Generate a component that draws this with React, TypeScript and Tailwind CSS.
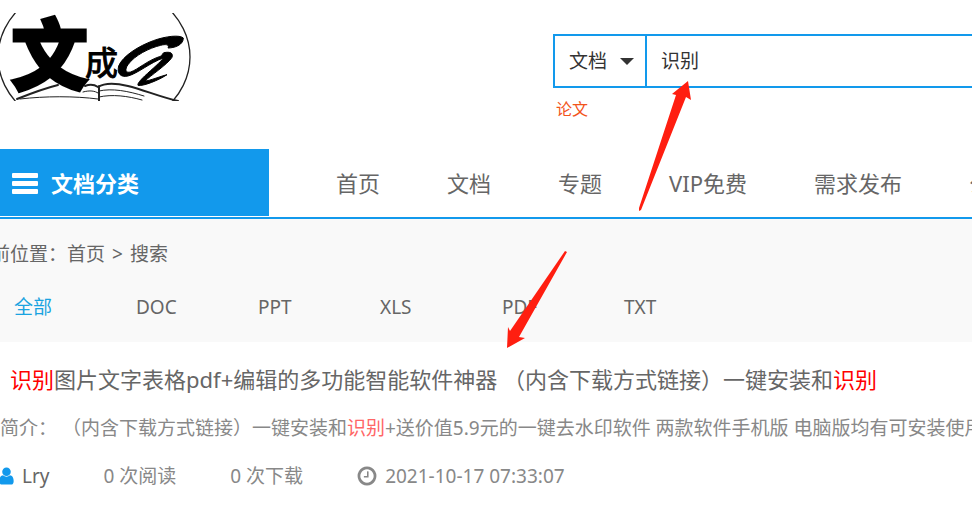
import React from 'react';

const NAV = ['首页', '文档', '专题', 'VIP免费', '需求发布', '公告'];
const TYPES = ['全部', 'DOC', 'PPT', 'XLS', 'PDF', 'TXT'];

function Logo() {
    return (
        <svg width="192" height="88" viewBox="0 13 192 88" role="img" aria-label="文成">
            <ellipse cx="94" cy="57" rx="96" ry="77" fill="none" stroke="#222" strokeWidth="1.3" />
            {/* open book under the characters */}
            <g fill="none" stroke="#222" strokeLinecap="round">
                <path d="M17 99 C32 93 46 88 58 85" strokeWidth="2" />
                <path d="M20 99 C45 96 75 96 98 99" strokeWidth="1" />
                <path d="M99 101 V86 M85 86 C90 84 95 85 98 87 C104 83 116 83 128 86 C144 90 160 97 178 101" strokeWidth="2" />
                <path d="M83 92 C90 90 95 91 98 93 M99 91 C112 88 128 91 144 96" strokeWidth="1" />
                <path d="M99 97 C112 94 128 96 142 100" strokeWidth="1" />
            </g>
            <text x="11" y="84" fontSize="77" fontWeight="900" stroke="#000" strokeWidth="3" className="font-['Noto_Sans_CJK_SC',sans-serif]">文</text>
            <text x="85" y="75" fontSize="33" stroke="#000" className="font-['Noto_Sans_CJK_SC',sans-serif]">成</text>
            <g transform="translate(76 30) scale(.3333)">
                <path d="M322 24 C312 14 270 18 232 32 C188 48 140 78 128 108 C122 132 136 143 156 138 C186 130 222 98 262 84 C256 94 228 118 206 138 C194 150 184 160 186 166 C200 170 250 150 273 134 C250 140 222 152 207 153 C222 138 276 102 288 82 C292 70 284 64 264 68 C256 72 262 76 250 80 C214 92 186 118 164 126 C148 130 146 118 156 104 C176 76 220 54 254 46 C276 40 280 48 276 54 C294 54 322 46 322 24 Z" fill="#000" stroke="#000" strokeWidth="3" />
            </g>
        </svg>
    );
}

function Arrows() {
    return (
        <svg className="pointer-events-none absolute left-0 top-0" width="972" height="506" fill="#ff1e10" aria-hidden="true">
            <path d="M688 81 L691 100 L686 97 L641 210 L639 211 L639 208 L676 95 L672 94 Z" />
            <path d="M507 348 L508 327 L510 331 L565 251 L567 252 L519 337 L525 338 Z" />
        </svg>
    );
}

function UserIcon() {
    return (
        <svg className="-ml-px fill-[#1299ec]" width="15" height="20" viewBox="0 0 1280 1792" aria-hidden="true">
            <path d="M1280 1399q0 109-62.5 187t-150.5 78h-854q-88 0-150.5-78t-62.5-187q0-85 8.5-160.5t31.5-152 58.5-131 94-89 134.5-34.5q131 128 313 128t313-128q76 0 134.5 34.5t94 89 58.5 131 31.5 152 8.5 160.5zm-256-887q0 159-112.5 271.5t-271.5 112.5-271.5-112.5-112.5-271.5 112.5-271.5 271.5-112.5 271.5 112.5 112.5 271.5z" />
        </svg>
    );
}

function ClockIcon() {
    return (
        <svg className="fill-current" width="20" height="22" viewBox="0 0 1536 1792" aria-hidden="true">
            <path d="M896 544v448q0 14-9 23t-23 9h-320q-14 0-23-9t-9-23v-64q0-14 9-23t23-9h224v-352q0-14 9-23t23-9h64q14 0 23 9t9 23zm416 352q0-148-73-273t-198-198-273-73-273 73-198 198-73 273 73 273 198 198 273 73 273-73 198-198 73-273zm224 0q0 209-103 385.5t-279.5 279.5-385.5 103-385.5-103-279.5-279.5-103-385.5 103-385.5 279.5-279.5 385.5-103 385.5 103 279.5 279.5 103 385.5z" />
        </svg>
    );
}

export default function App() {
    return (
        <div className="relative overflow-hidden whitespace-nowrap bg-white pb-4 font-['Noto_Sans','Noto_Sans_CJK_SC',sans-serif] text-[19px] leading-7 text-[#666]">
            <header className="flex justify-between pt-[13px]">
                <Logo />
                <form className="mt-[21px] w-[419px]" onSubmit={(e) => e.preventDefault()}>
                    <div className="flex h-[54px] border-2 border-r-0 border-[#1299ec] text-[#333]">
                        <div className="relative flex w-[92px] items-center border-r-2 border-[#1299ec]">
                            <select aria-label="类型" className="h-full w-full appearance-none bg-transparent pl-[14px] outline-none">
                                <option>文档</option>
                            </select>
                            <svg className="pointer-events-none absolute right-[11px]" width="14" height="7" fill="#333" aria-hidden="true">
                                <path d="M0 0 H14 L7 7 Z" />
                            </svg>
                        </div>
                        <input type="text" aria-label="搜索" defaultValue="识别" className="min-w-0 flex-1 bg-transparent px-[14px] outline-none" />
                    </div>
                    <a href="#" className="ml-[3px] mt-[7px] block text-base leading-7 text-[#f2541b]">论文</a>
                </form>
            </header>

            <nav className="mt-[26px] flex h-[70px] items-start border-b-2 border-[#1299ec] text-[22px]">
                <button type="button" className="flex h-[67px] w-[269px] shrink-0 items-center gap-3 bg-[#1299ec] pl-3 font-bold text-white">
                    <svg width="27" height="22" fill="currentColor" aria-hidden="true">
                        <rect x="0" y="1" width="26" height="5" rx="1" />
                        <rect x="0" y="9" width="26" height="5" rx="1" />
                        <rect x="0" y="17" width="26" height="5" rx="1" />
                    </svg>
                    文档分类
                </button>
                <ul className="ml-[67px] flex h-[67px] items-center gap-[67px]">
                    {NAV.map((item) => (
                        <li key={item}>
                            <a href="#">{item}</a>
                        </li>
                    ))}
                </ul>
            </nav>

            <section className="bg-[#f9f9f9] pb-[21px] pt-[21px]">
                <p className="-ml-7">
                    当前位置：<a href="#">首页</a>
                    <span className="mx-[7px]">&gt;</span>
                    <a href="#">搜索</a>
                </p>
                <ul className="mt-[25px] flex pl-[14px]">
                    {TYPES.map((type, index) => (
                        <li key={type} className="w-[122px]">
                            <a href="#" className={index === 0 ? 'text-[#1aa3e0]' : ''}>{type}</a>
                        </li>
                    ))}
                </ul>
            </section>

            <article className="pt-[23px] text-[#888]">
                <h2 className="pl-[10px] text-[22px] text-[#666]">
                    <a href="#">
                        <span className="text-[#ff0000]">识别</span>图片文字表格pdf+编辑的多功能智能软件神器 （内含下载方式链接）一键安装和<span className="text-[#ff0000]">识别</span>
                    </a>
                </h2>
                <p className="mt-[21px]">
                    简介： （内含下载方式链接）一键安装和<span className="text-[#ff6666]">识别</span>+送价值5.9元的一键去水印软件 两款软件手机版 电脑版均有可安装使用
                </p>
                <div className="mt-5 flex items-center">
                    <a href="#" className="flex items-center gap-2 text-[#666]">
                        <UserIcon />
                        Lry
                    </a>
                    <span className="ml-[54px]">0 次阅读</span>
                    <span className="ml-[54px]">0 次下载</span>
                    <span className="ml-[54px] flex items-center gap-2">
                        <ClockIcon />
                        2021-10-17 07:33:07
                    </span>
                </div>
            </article>

            <Arrows />
        </div>
    );
}
